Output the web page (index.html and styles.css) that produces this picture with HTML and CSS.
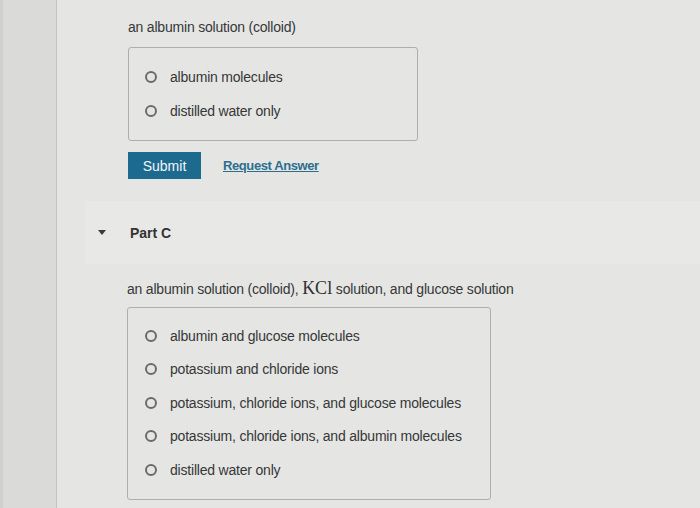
FILE: index.html
```html
<!DOCTYPE html>
<html lang="en">
<head>
	<meta charset="UTF-8" />
	<meta name="viewport" content="width=device-width, initial-scale=1.0" />
	<title>Part B / Part C</title>
	<link rel="stylesheet" href="styles.css">
</head>
<body>
	<div class="page">
		<div class="side"></div>
		<div class="main">
			<div class="part">
				<p class="question">an albumin solution (colloid)</p>
				<div class="choices">
					<label class="choice"><span class="radio"></span>albumin molecules</label>
					<label class="choice"><span class="radio"></span>distilled water only</label>
				</div>
				<div class="actions">
					<button class="submit">Submit</button>
					<a class="request" href="#">Request Answer</a>
				</div>
			</div>

			<div class="part-head">
				<span class="caret"></span>
				<span class="part-title">Part C</span>
			</div>

			<div class="part part-c">
				<p class="question">an albumin solution (colloid), <span class="math">KCl</span> solution, and glucose solution</p>
				<div class="choices choices-c">
					<label class="choice"><span class="radio"></span>albumin and glucose molecules</label>
					<label class="choice"><span class="radio"></span>potassium and chloride ions</label>
					<label class="choice"><span class="radio"></span>potassium, chloride ions, and glucose molecules</label>
					<label class="choice"><span class="radio"></span>potassium, chloride ions, and albumin molecules</label>
					<label class="choice"><span class="radio"></span>distilled water only</label>
				</div>
			</div>
		</div>
	</div>
</body>
</html>
```

FILE: styles.css
```css
*{margin: 0;padding: 0;box-sizing: border-box;}
html,body{height: 100%;}
body{
	font-family: "Liberation Sans", Arial, sans-serif;
	font-size: 14px;color: #363737;
	background: #e4e5e3;overflow: hidden;
}
.page{display: flex;height: 100%;}
.side{
	width: 57px;flex: none;
	background: #dadbd9;border-right: 1px solid #c3c4c2;
	border-left: 3px solid #cfd0ce;
}
.main{flex: 1;background: #e5e6e4;padding-top: 17px;}

.part{padding-left: 71px;}
.question{height: 20px;line-height: 20px;letter-spacing: -0.2px;}
.math{
	font-family: "Liberation Serif", "Times New Roman", serif;
	font-size: 18px;line-height: 1;color: #2f3030;letter-spacing: 0;
}

.choices{
	width: 290px;margin-top: 10px;
	border: 1px solid #aeafad;border-radius: 3px;
	padding: 12px 0 12px 16px;
}
.choice{
	display: flex;align-items: center;
	height: 34px;letter-spacing: -0.2px;
}
.radio{
	width: 12px;height: 12px;flex: none;
	border: 2px solid #6a6b6a;border-radius: 50%;
	margin-right: 13px;
}

.actions{display: flex;align-items: center;margin-top: 11px;}
.submit{
	width: 73px;height: 27px;
	background: #1d6a8f;color: #f2f6f8;border: none;
	font-family: inherit;font-size: 14px;
}
.request{
	margin-left: 22px;
	font-size: 13px;font-weight: bold;color: #2d6e8e;
	text-decoration: underline;letter-spacing: -0.4px;
}

.part-head{
	display: flex;align-items: center;
	height: 63px;margin: 22px 0 0 28px;
	padding-left: 13px;background: #e8e9e7;
}
.caret{
	width: 0;height: 0;
	border-left: 4px solid transparent;border-right: 4px solid transparent;
	border-top: 5px solid #3a3b3b;
}
.part-title{margin-left: 24px;font-weight: bold;color: #333;}

.part-c{padding-left: 70px;padding-top: 15px;}
.choices-c{width: 364px;margin-top: 8px;padding: 11px 0 12px 17px;}
.choices-c .choice{height: 33.5px;}
```
